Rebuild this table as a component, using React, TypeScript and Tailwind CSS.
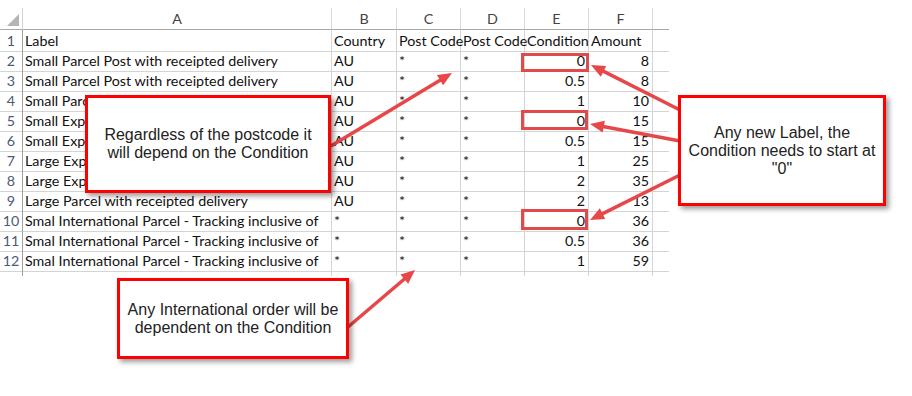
import React from 'react';

const rows: string[][] = [
  ['Label', 'Country', 'Post Code', 'Post Code', 'Condition', 'Amount'],
  ['Small Parcel Post with receipted delivery', 'AU', '*', '*', '0', '8'],
  ['Small Parcel Post with receipted delivery', 'AU', '*', '*', '0.5', '8'],
  ['Small Parcel Post with receipted delivery', 'AU', '*', '*', '1', '10'],
  ['Small Express Post with receipted delivery', 'AU', '*', '*', '0', '15'],
  ['Small Express Post with receipted delivery', 'AU', '*', '*', '0.5', '15'],
  ['Large Express Post with receipted delivery', 'AU', '*', '*', '1', '25'],
  ['Large Express Post with receipted delivery', 'AU', '*', '*', '2', '35'],
  ['Large Parcel with receipted delivery', 'AU', '*', '*', '2', '13'],
  ['Smal International Parcel - Tracking inclusive of', '*', '*', '*', '0', '36'],
  ['Smal International Parcel - Tracking inclusive of', '*', '*', '*', '0.5', '36'],
  ['Smal International Parcel - Tracking inclusive of', '*', '*', '*', '1', '59'],
];

const cols = ['A', 'B', 'C', 'D', 'E', 'F', ''];
const gridCols = 'grid grid-cols-[23px_309px_65px_64px_64px_64px_64px_16px]';

// arrow from (x1,y1) to tip (x2,y2)
function Arrow({ x1, y1, x2, y2 }: { x1: number; y1: number; x2: number; y2: number }) {
  const dx = x2 - x1;
  const dy = y2 - y1;
  const len = Math.sqrt(dx * dx + dy * dy);
  const ux = dx / len;
  const uy = dy / len;
  const head = 14;
  const half = 6;
  const bx = x2 - ux * head;
  const by = y2 - uy * head;
  const pts = `${x2},${y2} ${bx - uy * half},${by + ux * half} ${bx + uy * half},${by - ux * half}`;
  return (
    <g>
      <line x1={x1} y1={y1} x2={bx + ux * 2} y2={by + uy * 2} stroke="#e8474a" strokeWidth={3.5} />
      <polygon points={pts} fill="#e8474a" />
    </g>
  );
}

function Callout({ className, children }: { className: string; children: React.ReactNode }) {
  return (
    <div
      className={`absolute flex items-center justify-center bg-white border-[3px] border-[#ff0000] shadow-[3px_3px_5px_rgba(0,0,0,0.4)] text-center text-[16px] leading-[18px] text-[#222] font-['Liberation_Sans',Arial,sans-serif] ${className}`}
    >
      {children}
    </div>
  );
}

export default function App() {
  return (
    <div className="relative w-[912px] h-[396px] overflow-hidden bg-white">
      {/* Spreadsheet */}
      <div className="pt-[8px] font-['Lato',sans-serif] text-[14.3px] text-[#111]">
        {/* column letters */}
        <div className={`${gridCols} h-[22px]`}>
          <div className="relative border-r border-b border-r-[#d4d4d4] border-b-[#a8a8a8]">
            <svg className="absolute left-[7px] top-[6px]" width="13" height="13" viewBox="0 0 13 13">
              <polygon points="0,12 12,12 12,0" fill="#b5b5b5" />
            </svg>
          </div>
          {cols.map((c, i) => (
            <div
              key={i}
              className={`flex items-center justify-center border-b border-b-[#a8a8a8] text-[#444] ${i < 6 ? 'border-r border-r-[#d9d9d9]' : ''}`}
            >
              {c}
            </div>
          ))}
        </div>

        {/* data rows */}
        {rows.map((r, ri) => (
          <div key={ri} className={`${gridCols} h-[20px]`}>
            <div className="flex items-center justify-center border-r border-b border-r-[#a0a0a0] border-b-[#d4d4d4] text-[#4d5a75]">
              {ri + 1}
            </div>
            {r.map((v, ci) => {
              const num = ri > 0 && ci >= 4;
              return (
                <div
                  key={ci}
                  className={`flex items-center whitespace-nowrap overflow-visible border-r border-b border-[#d4d4d4] ${num ? 'justify-end pr-[3px]' : 'pl-[2px]'}`}
                >
                  {v}
                </div>
              );
            })}
            <div className="border-b border-[#d4d4d4]" />
          </div>
        ))}

        {/* trailing stub */}
        <div className={`${gridCols} h-[6px]`}>
          <div className="border-r border-[#a0a0a0]" />
          {cols.slice(0, 6).map((c) => (
            <div key={c} className="border-r border-[#d4d4d4]" />
          ))}
        </div>
      </div>

      {/* highlight boxes on Condition */}
      <div className="absolute left-[521px] top-[53px] w-[68px] h-[19px] border-[3px] border-[#e04a4a]" />
      <div className="absolute left-[521px] top-[110px] w-[67px] h-[20px] border-[3px] border-[#e04a4a]" />
      <div className="absolute left-[521px] top-[209px] w-[67px] h-[21px] border-[3px] border-[#e04a4a]" />

      {/* arrows */}
      <svg className="absolute inset-0 pointer-events-none" width="912" height="396" viewBox="0 0 912 396">
        <Arrow x1={331} y1={146} x2={452} y2={73} />
        <Arrow x1={680} y1={110} x2={591} y2={65} />
        <Arrow x1={680} y1={141} x2={590} y2={124} />
        <Arrow x1={680} y1={175} x2={590} y2={220} />
        <Arrow x1={348} y1={327} x2={415} y2={270} />
      </svg>

      {/* callouts */}
      <Callout className="left-[85px] top-[95px] w-[246px] h-[98px]">
        <span>
          Regardless of the postcode it
          <br />
          will depend on the Condition
        </span>
      </Callout>
      <Callout className="left-[678px] top-[95px] w-[208px] h-[111px]">
        <span>
          Any new Label, the
          <br />
          Condition needs to start at
          <br />
          "0"
        </span>
      </Callout>
      <Callout className="left-[117px] top-[278px] w-[232px] h-[81px]">
        <span>
          Any International order will be
          <br />
          dependent on the Condition
        </span>
      </Callout>
    </div>
  );
}
